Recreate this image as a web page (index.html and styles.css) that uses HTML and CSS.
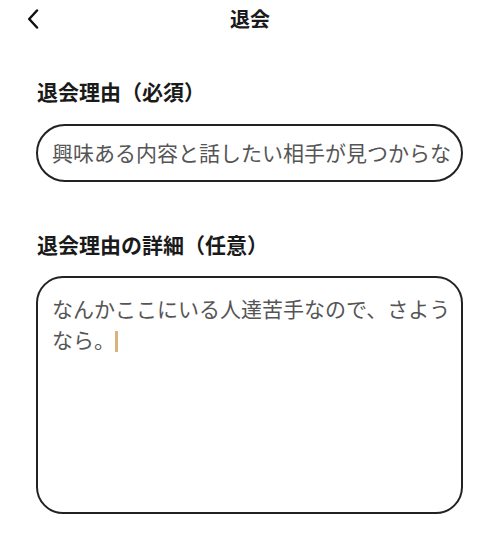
FILE: index.html
```html
<!DOCTYPE html>
<html lang="ja">
<head>
<meta charset="utf-8">
<link rel="stylesheet" href="styles.css">
</head>
<body>
<header class="header">
  <button class="back" aria-label="戻る">
    <svg width="12" height="20" viewBox="0 0 12 20"><polyline points="10,1.5 2.2,10 10,18.5" fill="none" stroke="#111" stroke-width="2.5" stroke-linecap="round" stroke-linejoin="round"/></svg>
  </button>
  <h1 class="title">退会</h1>
</header>
<main class="form">
  <label class="label label-first">退会理由（必須）</label>
  <div class="select">興味ある内容と話したい相手が見つからな</div>
  <label class="label label-second">退会理由の詳細（任意）</label>
  <div class="textarea">なんかここにいる人達苦手なので、さようなら。<span class="caret"></span></div>
</main>
</body>
</html>
```
FILE: styles.css
```css
* { box-sizing: border-box; }
html, body { margin: 0; padding: 0; background: #fff; }
body {
  width: 500px;
  height: 555px;
  font-family: "Noto Sans CJK JP", "Noto Sans", sans-serif;
  color: #1a1a1a;
  overflow: hidden;
}
.header {
  position: relative;
  height: 38px;
  display: flex;
  align-items: center;
  justify-content: center;
}
.back {
  position: absolute;
  left: 27px;
  top: 9px;
  padding: 0;
  border: 0;
  background: none;
  display: flex;
}
.title {
  margin: 0;
  font-size: 20px;
  line-height: 38px;
  font-weight: 700;
}
.form {
  display: flex;
  flex-direction: column;
  padding: 0 37px 0 36px;
}
.label {
  display: block;
  font-size: 21px;
  line-height: 30px;
  font-weight: 700;
  padding-left: 1px;
}
.label-first { margin-top: 38px; }
.label-second { margin-top: 47px; }
.select {
  margin-top: 18px;
  height: 58px;
  border: 2px solid #222;
  border-radius: 29px;
  padding: 0 8px 0 14px;
  font-size: 21px;
  line-height: 53px;
  color: #555;
  white-space: nowrap;
  overflow: hidden;
}
.textarea {
  margin-top: 17px;
  height: 238px;
  border: 2px solid #222;
  border-radius: 27px;
  padding: 15px 8px 0 14px;
  font-size: 21px;
  line-height: 31px;
  color: #555;
}
.caret {
  display: inline-block;
  width: 3px;
  height: 21px;
  background: #dcb27c;
  vertical-align: -4px;
  margin-left: 0;
}
```
